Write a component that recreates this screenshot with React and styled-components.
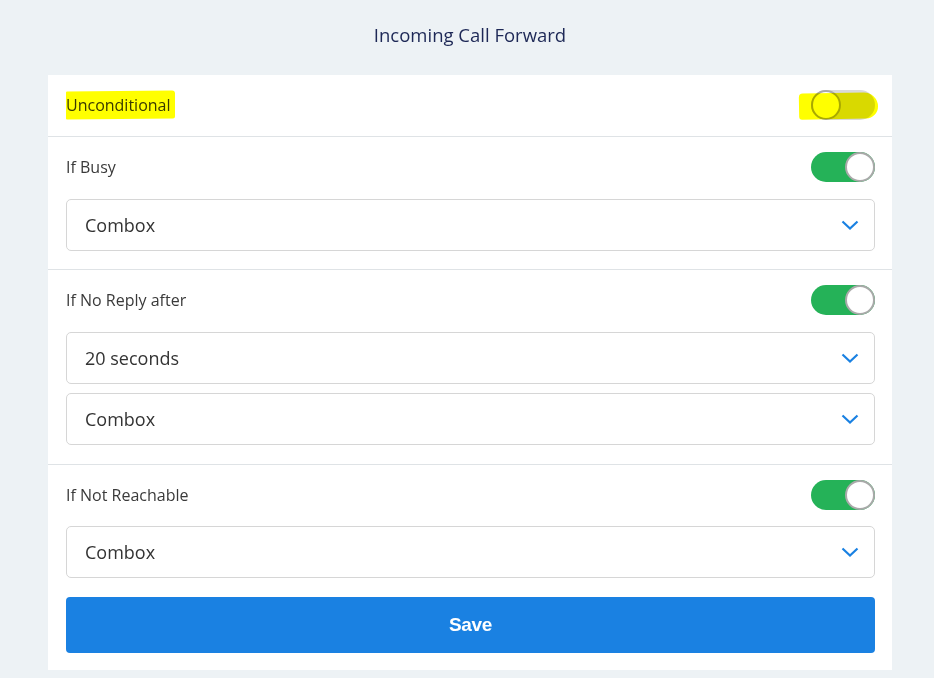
import React from "react";
import styled, { createGlobalStyle } from "styled-components";

const GlobalStyle = createGlobalStyle`
	body {
		margin: 0;
		background: #edf2f5;
		font-family: "Open Sans", "Liberation Sans", sans-serif;
	}
`;

const Page = styled.div`
	width: 844px;
	margin-left: 48px;
	padding-bottom: 8px;
`;

const Title = styled.h1`
	margin: 0;
	height: 75px;
	display: flex;
	align-items: center;
	justify-content: center;
	padding-bottom: 7px;
	box-sizing: border-box;
	font-size: 18.5px;
	font-weight: 400;
	color: #1d2856;
`;

const Card = styled.div`
	background: #fff;
`;

const Section = styled.div`
	display: flex;
	flex-direction: column;
	padding: 15px 17px ${(p) => p.bottom || "18px"} 18px;
	border-bottom: ${(p) => (p.last ? "none" : "1px solid #dfe3e6")};
`;

const Header = styled.div`
	display: flex;
	align-items: center;
	justify-content: space-between;
	height: 30px;
`;

const Label = styled.span`
	position: relative;
	font-size: 16px;
	color: #3a3a3a;
`;

const Marker = styled.span`
	position: absolute;
	left: 0;
	right: -4px;
	top: -3px;
	bottom: -3px;
	background: #ffff00;
	mix-blend-mode: multiply;
	border-radius: 1px 3px 2px 1px;
	transform: skewY(-0.6deg);
`;

const Track = styled.div`
	position: relative;
	width: 64px;
	height: 30px;
	border-radius: 15px;
	background: ${(p) => (p.on ? "#25b258" : "#d9d9d9")};
	display: flex;
	justify-content: ${(p) => (p.on ? "flex-end" : "flex-start")};
`;

const Knob = styled.div`
	width: 30px;
	height: 30px;
	box-sizing: border-box;
	border-radius: 50%;
	background: #fff;
	border: 2px solid #a9a9a9;
`;

const ToggleMarker = styled.div`
	position: absolute;
	left: -12px;
	right: -3px;
	top: 3px;
	bottom: 1px;
	background: #ffff00;
	border-radius: 4px 14px 12px 3px;
	mix-blend-mode: multiply;
	transform: rotate(-1deg);
`;

const Controls = styled.div`
	display: flex;
	flex-direction: column;
	gap: 9px;
	margin-top: ${(p) => p.top || "17px"};
`;

const Select = styled.div`
	display: flex;
	align-items: center;
	justify-content: space-between;
	height: 52px;
	box-sizing: border-box;
	border: 1px solid #d6d6d6;
	border-radius: 5px;
	padding: 0 15px 0 18px;
	font-size: 18px;
	color: #333;
`;

const SaveButton = styled.button`
	margin-top: 19px;
	height: 56px;
	border: none;
	border-radius: 4px;
	background: #1a81e2;
	color: #fff;
	font-family: "Liberation Sans", Arial, sans-serif;
	font-size: 19px;
	font-weight: 700;
	letter-spacing: -0.3px;
`;

const Chevron = () => (
	<svg width="18" height="10" viewBox="0 0 18 10">
		<path d="M1.5 1.5 L9 8.5 L16.5 1.5" fill="none" stroke="#1a81e2" strokeWidth="2.2" />
	</svg>
);

const Toggle = ({ on, marked }) => (
	<Track on={on}>
		<Knob />
		{marked && <ToggleMarker />}
	</Track>
);

const App = () => {
	return (
		<Page>
			<GlobalStyle />
			<Title>Incoming Call Forward</Title>
			<Card>
				<Section bottom="16px">
					<Header>
						<Label>
							Unconditional
							<Marker />
						</Label>
						<Toggle marked />
					</Header>
				</Section>
				<Section>
					<Header>
						<Label>If Busy</Label>
						<Toggle on />
					</Header>
					<Controls>
						<Select>
							Combox
							<Chevron />
						</Select>
					</Controls>
				</Section>
				<Section bottom="19px">
					<Header>
						<Label>If No Reply after</Label>
						<Toggle on />
					</Header>
					<Controls>
						<Select>
							20 seconds
							<Chevron />
						</Select>
						<Select>
							Combox
							<Chevron />
						</Select>
					</Controls>
				</Section>
				<Section last bottom="17px">
					<Header>
						<Label>If Not Reachable</Label>
						<Toggle on />
					</Header>
					<Controls top="16px">
						<Select>
							Combox
							<Chevron />
						</Select>
					</Controls>
					<SaveButton>Save</SaveButton>
				</Section>
			</Card>
		</Page>
	);
};

export default App;
